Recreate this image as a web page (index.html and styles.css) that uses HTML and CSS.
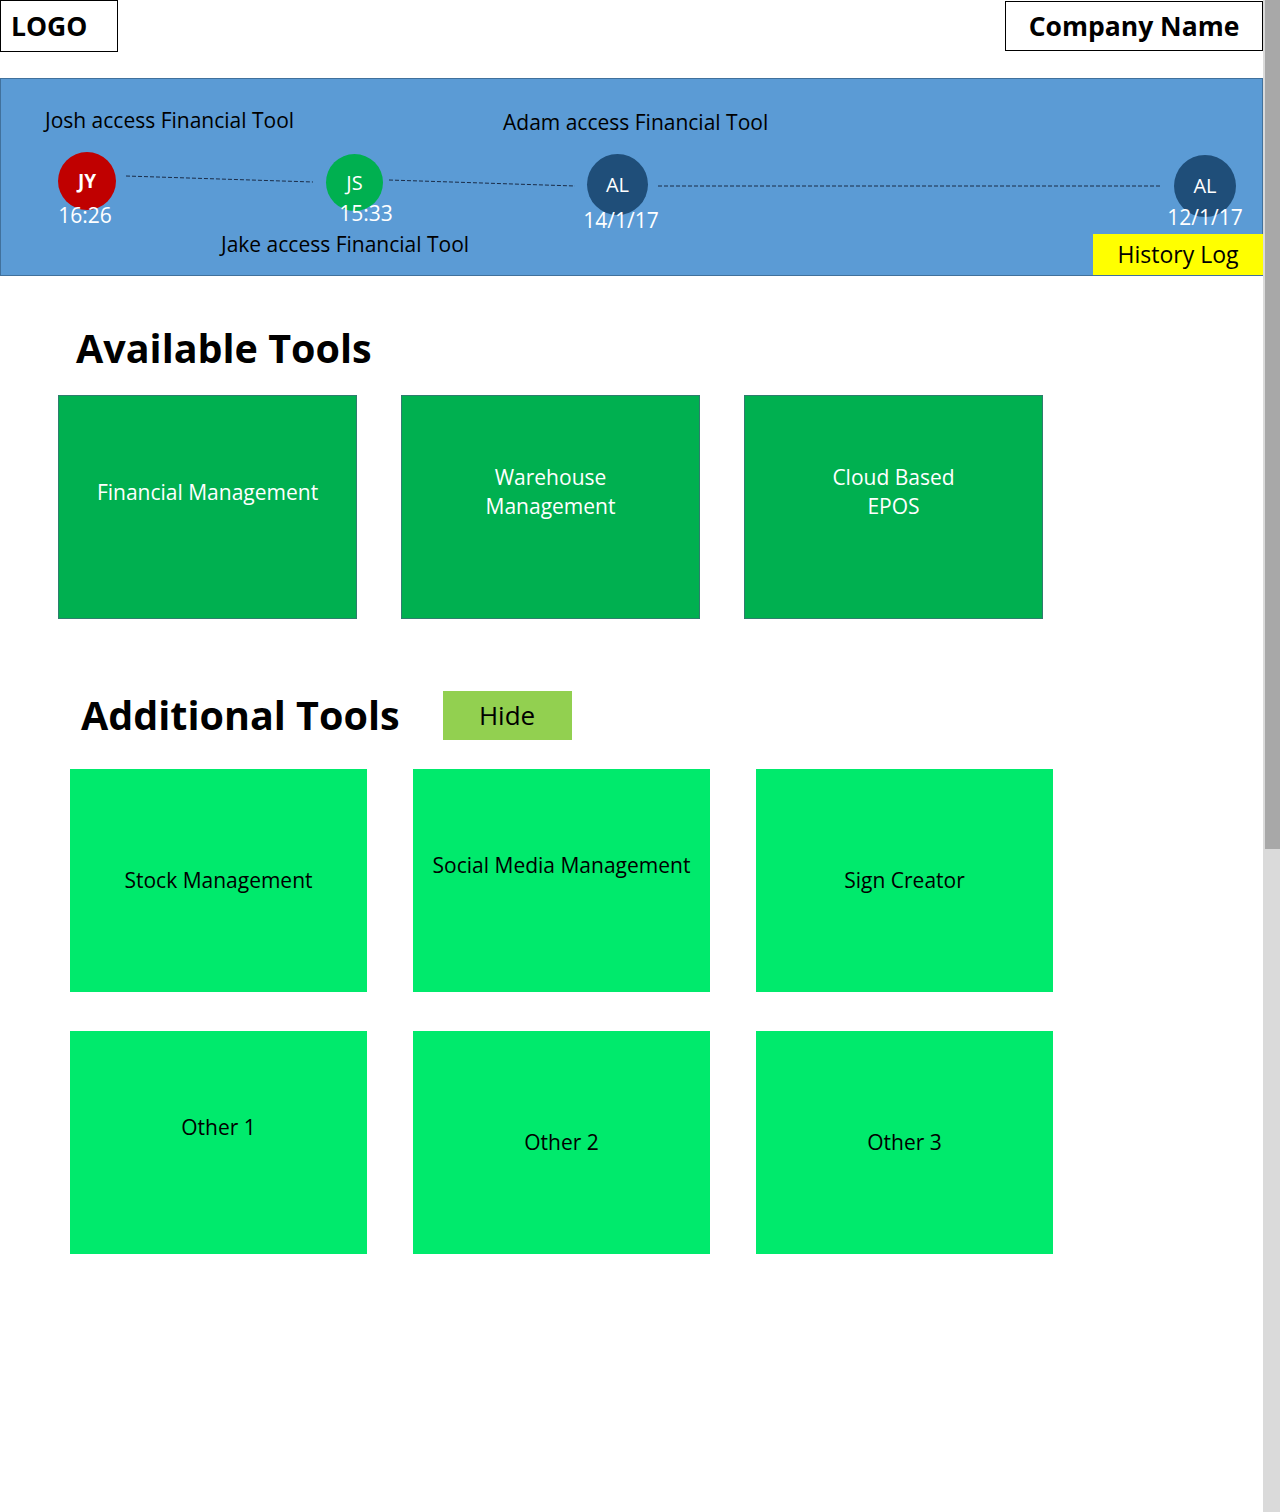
FILE: index.html
```html
<!DOCTYPE html>
<html lang="en">
<head>
<meta charset="utf-8">
<title>Tools Dashboard</title>
<link rel="stylesheet" href="styles.css">
</head>
<body>
<div class="page">
  <header class="topbar">
    <div class="logo">LOGO</div>
    <div class="company">Company Name</div>
  </header>

  <section class="timeline">
    <svg class="connectors" width="1262" height="196" viewBox="0 0 1262 196">
      <line x1="125" y1="97" x2="312" y2="103" />
      <line x1="388" y1="101" x2="574" y2="107" />
      <line x1="657" y1="107" x2="1159" y2="107" />
    </svg>

    <div class="event-label lbl-josh">Josh access Financial Tool</div>
    <div class="event-label lbl-adam">Adam access Financial Tool</div>
    <div class="event-label lbl-jake">Jake access Financial Tool</div>

    <div class="avatar av-jy">JY</div>
    <div class="avatar av-js">JS</div>
    <div class="avatar av-al1">AL</div>
    <div class="avatar av-al2">AL</div>

    <div class="stamp st-1">16:26</div>
    <div class="stamp st-2">15:33</div>
    <div class="stamp st-3">14/1/17</div>
    <div class="stamp st-4">12/1/17</div>

    <div class="history">History Log</div>
  </section>

  <main class="content">
    <section class="available">
      <h2 class="section-title title-available">Available Tools</h2>
      <div class="grid grid-available">
        <div class="tool tool-core raised">Financial Management</div>
        <div class="tool tool-core raised">Warehouse<br>Management</div>
        <div class="tool tool-core raised">Cloud Based<br>EPOS</div>
      </div>
    </section>

    <section class="additional">
      <div class="section-head">
        <h2 class="section-title title-additional">Additional Tools</h2>
        <button class="hide-btn">Hide</button>
      </div>
      <div class="grid grid-additional">
        <div class="tool tool-extra">Stock Management</div>
        <div class="tool tool-extra raised">Social Media Management</div>
        <div class="tool tool-extra">Sign Creator</div>
        <div class="tool tool-extra raised">Other 1</div>
        <div class="tool tool-extra">Other 2</div>
        <div class="tool tool-extra">Other 3</div>
      </div>
    </section>
  </main>
</div>
<div class="scrollbar"><div class="thumb"></div></div>
</body>
</html>
```

FILE: styles.css
```css
* { box-sizing: border-box; }

html, body {
  margin: 0;
  padding: 0;
}

body {
  display: flex;
  width: 1280px;
  height: 1512px;
  overflow: hidden;
  background: #ffffff;
  font-family: "Open Sans", "Noto Sans", sans-serif;
  color: #000;
}

.page {
  width: 1263px;
  flex: none;
}

/* ---------- top bar ---------- */
.topbar {
  height: 78px;
  display: flex;
  justify-content: space-between;
  align-items: flex-start;
}

.logo {
  width: 118px;
  height: 52px;
  border: 1px solid #000;
  display: flex;
  align-items: center;
  padding-left: 10px;
  font-weight: 700;
  font-size: 26.5px;
  line-height: 1;
}

.company {
  margin-top: 1px;
  width: 258px;
  height: 50px;
  border: 1px solid #000;
  display: flex;
  align-items: center;
  justify-content: center;
  font-weight: 700;
  font-size: 26.5px;
  line-height: 1;
}

/* ---------- timeline banner ---------- */
.timeline {
  position: relative;
  height: 198px;
  background: #5b9bd5;
  border: 1px solid #41719c;
}

.connectors {
  position: absolute;
  left: 0;
  top: 0;
}

.connectors line {
  stroke: #1a2c48;
  stroke-width: 1;
  stroke-dasharray: 4 2;
}

.event-label {
  position: absolute;
  font-size: 21px;
  line-height: 24px;
  white-space: nowrap;
  color: #000;
}
.lbl-josh { left: 44px; top: 29px; }
.lbl-adam { left: 502px; top: 31px; }
.lbl-jake { left: 220px; top: 153px; }

.avatar {
  position: absolute;
  border-radius: 50%;
  display: flex;
  align-items: center;
  justify-content: center;
  color: #fff;
  font-size: 20px;
  line-height: 1;
  background: #1f4e79;
}
.av-jy { left: 57px; top: 73px; width: 58px; height: 58px; background: #c00000; font-weight: 700; font-size: 19px; }
.av-js { left: 325px; top: 75px; width: 57px; height: 57px; background: #00b050; }
.av-al1 { left: 586px; top: 75px; width: 61px; height: 61px; }
.av-al2 { left: 1173px; top: 76px; width: 62px; height: 62px; }

.stamp {
  position: absolute;
  width: 100px;
  text-align: center;
  color: #fff;
  font-size: 21px;
  line-height: 24px;
}
.st-1 { left: 34px; top: 124px; }
.st-2 { left: 315px; top: 122px; }
.st-3 { left: 570px; top: 129px; }
.st-4 { left: 1154px; top: 126px; }

.history {
  position: absolute;
  right: -1px;
  bottom: 0;
  width: 170px;
  height: 41px;
  background: #ffff00;
  display: flex;
  align-items: center;
  justify-content: center;
  font-size: 23px;
  line-height: 1;
  color: #000;
}

/* ---------- content ---------- */
.section-title {
  margin: 0;
  font-weight: 700;
  font-size: 39.5px;
  line-height: 56px;
  white-space: nowrap;
}

.title-available {
  margin: 44px 0 19px 76px;
}

.grid {
  display: grid;
  grid-template-columns: repeat(3, 297px);
}

.grid-available {
  padding-left: 58px;
  column-gap: 44px;
  grid-template-columns: repeat(3, 299px);
}

.tool {
  display: flex;
  align-items: center;
  justify-content: center;
  text-align: center;
  font-size: 21px;
  line-height: 29px;
}

.tool-core {
  height: 224px;
  background: #00b050;
  border: 1px solid #2f7d6e;
  color: #fff;
}

.tool-extra {
  height: 223px;
  background: #00ea6c;
  color: #000;
}

.raised {
  padding-bottom: 30px;
}

.section-head {
  margin-top: 71px;
  height: 50px;
  display: flex;
  align-items: center;
}

.title-additional {
  margin-left: 81px;
}

.hide-btn {
  margin-left: 43px;
  width: 129px;
  height: 49px;
  border: none;
  background: #92d050;
  font-family: "Open Sans", "Noto Sans", sans-serif;
  font-size: 26px;
  color: #000;
  padding: 0;
}

.grid-additional {
  margin-top: 29px;
  padding-left: 70px;
  column-gap: 46px;
  row-gap: 39px;
}

/* ---------- fake scrollbar ---------- */
.scrollbar {
  width: 17px;
  height: 1512px;
  background: #dadada;
  flex: none;
  padding-left: 2px;
}

.thumb {
  width: 15px;
  height: 849px;
  background: #a8a8a8;
}
```
